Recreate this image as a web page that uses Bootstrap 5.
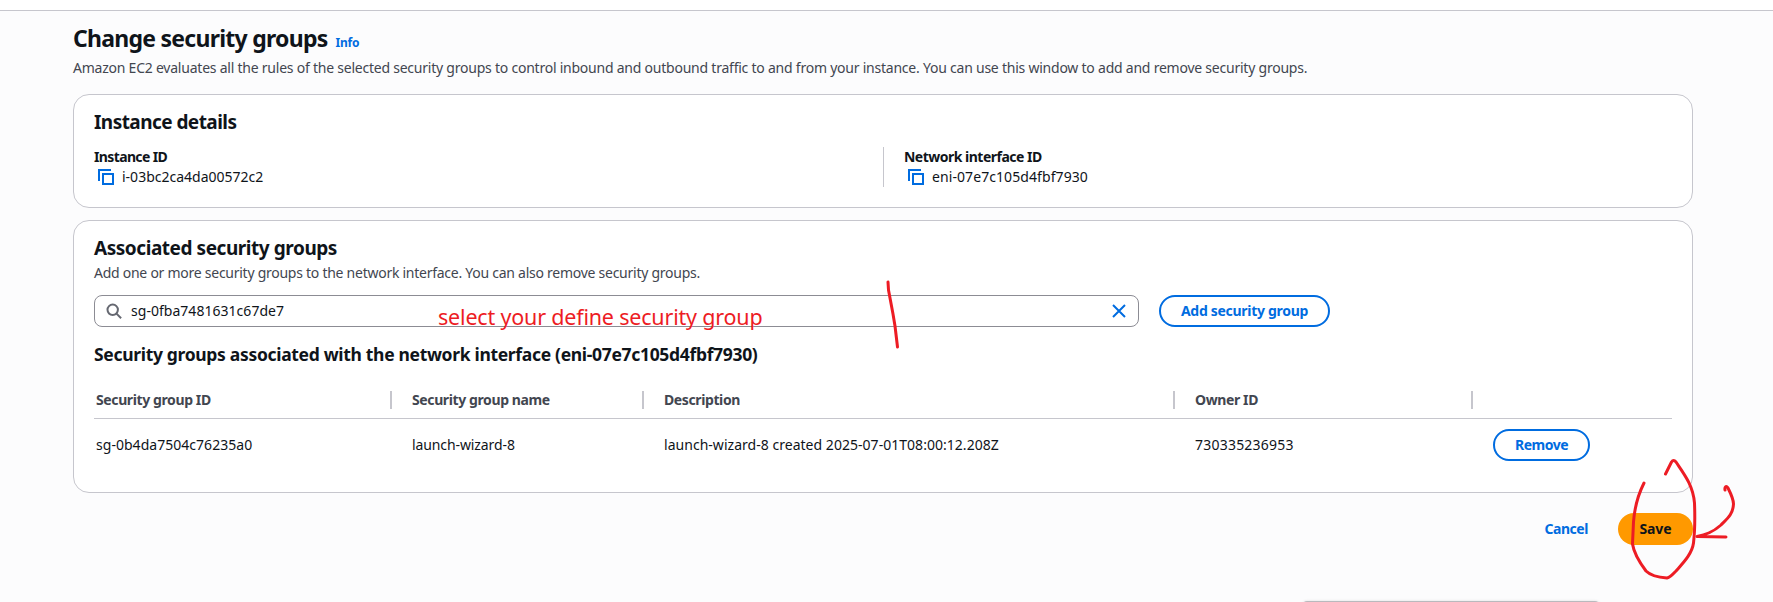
<!DOCTYPE html>
<html lang="en">
<head>
<meta charset="utf-8">
<meta name="viewport" content="width=device-width, initial-scale=1">
<title>Change security groups</title>
<link href="https://cdn.jsdelivr.net/npm/bootstrap@5.3.0/dist/css/bootstrap.min.css" rel="stylesheet">
<style>
  body { font-family: "Noto Sans", "Open Sans", sans-serif; font-size: 14px; line-height: 20px; color: #0f141a; background: #fcfcfd; height: 602px; overflow: hidden; position: relative; }
  .top-strip { height: 11px; border-bottom: 1px solid #c6c6cd; }
  .page { width: 1620px; margin-left: 73px; padding-top: 12px; }
  h1 { font-size: 23px; line-height: 30px; font-weight: 700; letter-spacing: -.74px; }
  h2 { font-size: 19px; line-height: 24px; font-weight: 700; letter-spacing: -.45px; }
  h2.tight { letter-spacing: -.55px; }
  h3 { font-size: 17.5px; line-height: 22px; font-weight: 700; letter-spacing: -.32px; }
  .info { font-size: 12px; font-weight: 700; letter-spacing: -.25px; color: #006ce0; text-decoration: none; margin-left: 8px; }
  .hint { color: #424650; letter-spacing: -.23px; white-space: nowrap; }
  .hint.sub { letter-spacing: -.26px; margin: 3px 0 12px; }
  .hint.lead-in { margin: 5px 0 16px; }
  .panel { background: #fff; border: 1px solid #c6c6cd; border-radius: 16px; padding: 15px 20px 20px; }
  .panel + .panel { margin-top: 12px; padding-bottom: 21px; }
  .pairs { margin-top: 13px; }
  .key { font-weight: 700; letter-spacing: -.51px; }
  .key.tight { letter-spacing: -.63px; }
  .val { letter-spacing: .08px; }
  .val.tight { letter-spacing: 0; }
  .copy { margin: 0 8px 0 4px; }
  .split { border-left: 1px solid #c6c6cd; padding-left: 20px; width: 789px; }
  .search { width: 1045px; height: 32px; border: 1px solid #8c8c94; border-radius: 8px; padding: 0 12px 0 11px; letter-spacing: .03px; }
  .query { margin-left: 9px; }
  .btn { height: 32px; border-radius: 16px; font-size: 14px; line-height: 20px; font-weight: 700; padding: 0; letter-spacing: -.3px; }
  .btn-line { border: 2px solid #006ce0; color: #006ce0; background: #fff; }
  .btn-add { width: 171px; margin-left: 20px; }
  .btn-remove { width: 97px; letter-spacing: -.5px; }
  .btn-save { width: 75px; background: #ff9900; color: #0f141a; border: 0; letter-spacing: -.1px; }
  .btn-cancel { color: #006ce0; border: 0; padding: 0 20px; letter-spacing: -.45px; }
  .actions { margin-top: 20px; gap: 10px; }
  .groups { table-layout: fixed; width: 1578px; margin: 15px 0 0; border-collapse: separate; border-spacing: 0; }
  .groups th { height: 39px; padding: 0 0 0 19px; border-bottom: 1px solid #c6c6cd; color: #424650; letter-spacing: -.39px; vertical-align: middle; }
  .groups th > div { height: 18px; line-height: 17px; margin-top: 2px; padding-right: 1px; }
  .groups th:not(:last-child) > div { border-right: 2px solid #c6c6cd; margin-right: 1px; }
  .groups td { height: 52px; padding: 0 0 0 19px; vertical-align: middle; letter-spacing: .03px; }
  .groups th:first-child, .groups td:first-child { padding-left: 2px; }
  .groups td.name { letter-spacing: -.1px; }
  .groups td.owner { letter-spacing: .22px; }
  .tray { position: absolute; left: 1303px; top: 601px; width: 296px; height: 10px; border-top: 1px solid #b9b9bd; border-radius: 4px 4px 0 0; box-shadow: 0 0 3px rgba(0,0,0,.12); }
  .marks { position: absolute; left: 0; top: 0; pointer-events: none; }
  .remark { position: absolute; left: 438px; top: 303px; font-size: 21.5px; line-height: 28px; color: #ed1c24; letter-spacing: -.19px; white-space: nowrap; }
</style>
</head>
<body>
<div class="top-strip bg-white"></div>
<main class="page">
  <div class="d-flex align-items-baseline">
    <h1 class="m-0">Change security groups</h1><a class="info" href="#">Info</a>
  </div>
  <p class="hint lead-in">Amazon EC2 evaluates all the rules of the selected security groups to control inbound and outbound traffic to and from your instance. You can use this window to add and remove security groups.</p>

  <section class="panel">
    <h2 class="tight mb-0">Instance details</h2>
    <div class="pairs d-flex justify-content-between">
      <div>
        <div class="key tight">Instance ID</div>
        <div class="d-flex align-items-center"><svg class="copy" width="16" height="16" fill="none" stroke="#006ce0" stroke-width="2"><path d="M1 12V1h12M5 5h10v10H5z"/></svg><span class="val tight">i-03bc2ca4da00572c2</span></div>
      </div>
      <div class="split">
        <div class="key">Network interface ID</div>
        <div class="d-flex align-items-center"><svg class="copy" width="16" height="16" fill="none" stroke="#006ce0" stroke-width="2"><path d="M1 12V1h12M5 5h10v10H5z"/></svg><span class="val">eni-07e7c105d4fbf7930</span></div>
      </div>
    </div>
  </section>

  <section class="panel">
    <h2 class="mb-0">Associated security groups</h2>
    <p class="hint sub">Add one or more security groups to the network interface. You can also remove security groups.</p>
    <div class="d-flex">
      <div class="search d-flex align-items-center">
        <svg width="16" height="16" fill="none" stroke="#656871" stroke-width="2"><circle cx="6.7" cy="6.8" r="5.2"/><path d="M10.5 10.6l4.6 4.7"/></svg>
        <span class="query">sg-0fba7481631c67de7</span>
        <svg class="ms-auto" width="14" height="14" fill="none" stroke="#006ce0" stroke-width="2"><path d="M1 1l12 12M13 1L1 13"/></svg>
      </div>
      <button class="btn btn-line btn-add">Add security group</button>
    </div>
    <h3 class="mb-0 mt-3">Security groups associated with the network interface (eni-07e7c105d4fbf7930)</h3>
    <table class="groups">
      <colgroup><col style="width:299px"><col style="width:252px"><col style="width:531px"><col style="width:298px"><col></colgroup>
      <thead><tr><th><div>Security group ID</div></th><th><div>Security group name</div></th><th><div>Description</div></th><th><div>Owner ID</div></th><th><div></div></th></tr></thead>
      <tbody><tr><td>sg-0b4da7504c76235a0</td><td class="name">launch-wizard-8</td><td>launch-wizard-8 created 2025-07-01T08:00:12.208Z</td><td class="owner">730335236953</td><td><button class="btn btn-line btn-remove">Remove</button></td></tr></tbody>
    </table>
  </section>

  <div class="actions d-flex justify-content-end">
    <button class="btn btn-cancel">Cancel</button>
    <button class="btn btn-save">Save</button>
  </div>
</main>

<div class="tray"></div>
<!-- hand-drawn annotations over the form -->
<div class="remark">select your define security group</div>
<svg class="marks" width="1773" height="602" fill="none" stroke="#ed1c24" stroke-width="3" stroke-linecap="round" stroke-linejoin="round">
  <path d="M888 282L888.500 290L893 314L895 326L897.500 347"/>
  <path d="M1644 483C1638 495 1634.500 508 1633.500 522L1632.500 544C1634 554 1640 563 1646 571C1651 576 1660 577.500 1667 578C1671 577 1673 574 1676 571C1683 563 1692 554 1693.500 543C1695 530 1695 516 1694.500 503C1693 485 1684 474 1676 462Q1673.500 459 1671.500 462L1665.500 474"/>
  <path d="M1725 490C1724.500 487 1726 485 1728 488C1731 494 1733.500 499 1733.500 504C1733 514 1728 518 1721 525C1712 533 1705 535 1697 536.500L1726 537"/>
</svg>
<script src="https://cdn.jsdelivr.net/npm/bootstrap@5.3.0/dist/js/bootstrap.bundle.min.js"></script>
</body>
</html>
